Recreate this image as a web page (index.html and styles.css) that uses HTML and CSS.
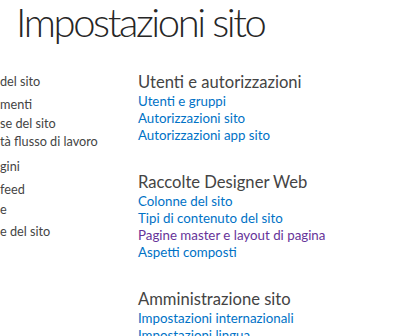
FILE: index.html
```html
<!DOCTYPE html>
<html lang="it">
<head>
    <meta charset="UTF-8">
    <title>Impostazioni sito</title>
    <link rel="stylesheet" href="styles.css">
</head>
<body>
    <header class="titolo">
        <h1>Impostazioni sito</h1>
    </header>

    <div class="pagina">
        <ul class="nav">
            <li class="n1">del sito</li>
            <li class="n2">menti</li>
            <li class="n3">se del sito</li>
            <li class="n4">tà flusso di lavoro</li>
            <li class="n5">gini</li>
            <li class="n6">feed</li>
            <li class="n7">e</li>
            <li class="n8">e del sito</li>
        </ul>

        <div class="contenuto">
            <div class="gruppo">
                <h2>Utenti e autorizzazioni</h2>
                <a href="#">Utenti e gruppi</a>
                <a href="#">Autorizzazioni sito</a>
                <a href="#">Autorizzazioni app sito</a>
            </div>
            <div class="gruppo">
                <h2>Raccolte Designer Web</h2>
                <a href="#">Colonne del sito</a>
                <a href="#">Tipi di contenuto del sito</a>
                <a href="#" class="visitato">Pagine master e layout di pagina</a>
                <a href="#">Aspetti composti</a>
            </div>
            <div class="gruppo">
                <h2>Amministrazione sito</h2>
                <a href="#">Impostazioni internazionali</a>
                <a href="#">Impostazioni lingua</a>
            </div>
        </div>
    </div>
</body>
</html>
```

FILE: styles.css
```css
body {
    margin: 0;
    font-family: Lato, "Liberation Sans", sans-serif;
    background-color: #fff;
    color: #444;
    overflow: hidden;
}

.titolo h1 {
    margin: 0;
    padding: 0 0 0 16px;
    font-size: 40px;
    font-weight: 300;
    letter-spacing: -2.4px;
    line-height: 44px;
    color: #262626;
}

.pagina {
    display: flex;
    padding-top: 27px;
}

.nav {
    list-style: none;
    margin: 0;
    padding: 0;
    width: 138px;
    font-size: 12.7px;
    line-height: 18px;
    color: #444;
}

.nav li { margin-top: 4px; }
.nav .n1 { margin-top: 1px; }
.nav .n2 { margin-top: 5px; }
.nav .n3 { margin-top: 1px; }
.nav .n4 { margin-top: 0; }
.nav .n5 { margin-top: 7px; }
.nav .n6 { margin-top: 5px; }
.nav .n7 { margin-top: 2px; }
.nav .n8 { margin-top: 4px; }

.contenuto {
    flex: 1;
}

.gruppo {
    margin-bottom: 27px;
}

.gruppo h2 {
    margin: 0;
    font-size: 16.6px;
    font-weight: 400;
    line-height: 22px;
    color: #444;
}

.gruppo a {
    display: block;
    font-size: 13.3px;
    line-height: 17px;
    color: #0072c6;
    text-decoration: none;
}

.gruppo a.visitato {
    color: #663399;
}
```
